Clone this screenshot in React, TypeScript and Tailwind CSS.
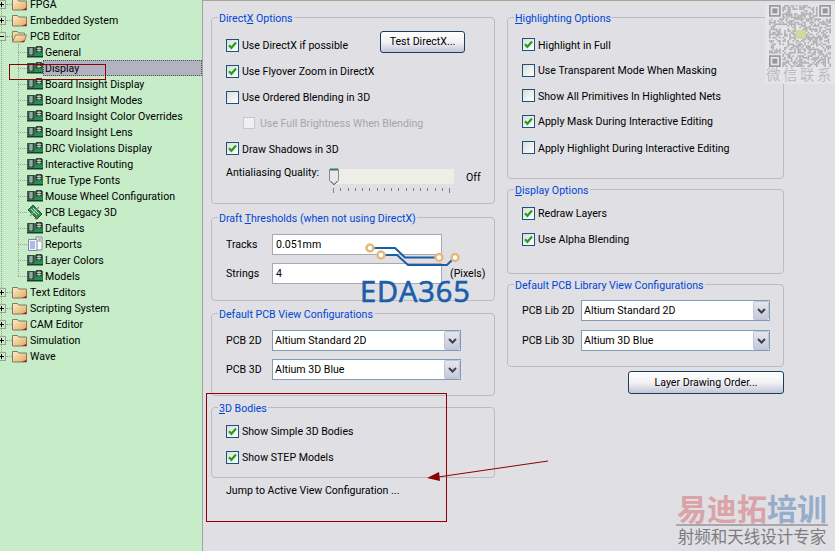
import React from "react";

const Check = () => (
  <svg width="9" height="9" viewBox="0 0 9 9" className="block">
    <path d="M1 4.2 L3.4 6.8 L8 1.5" fill="none" stroke="#21a121" strokeWidth="2.2" />
  </svg>
);

function CheckBox({ on }: { on: boolean }) {
  return (
    <span className="flex h-[13px] w-[13px] shrink-0 items-center justify-center border border-[#1c5180] bg-linear-to-br from-[#dcdcd7] to-white">
      {on ? <Check /> : null}
    </span>
  );
}

function CheckRow({ label, on, h }: { label: string; on: boolean; h: string }) {
  return (
    <div className={`flex items-center gap-[3px] ${h}`}>
      <CheckBox on={on} />
      <span className="whitespace-nowrap pt-[2px]">{label}</span>
    </div>
  );
}

function Group({ title, h, pad, children }: { title: React.ReactNode; h: string; pad: string; children?: React.ReactNode }) {
  return (
    <section className={`relative rounded-[4px] border border-[#bcbcc0] ${h} ${pad}`}>
      <h3 className="absolute left-[6px] top-[-6px] h-[14px] bg-[#dfdfe4] px-[1px] text-[10.6px] font-normal leading-[14px] text-[#0046d5] whitespace-nowrap">
        {title}
      </h3>
      {children}
    </section>
  );
}

function XpButton({ label, w, h }: { label: string; w: string; h: string }) {
  return (
    <button className={`flex items-center justify-center rounded-[3px] border border-[#15405f] bg-linear-to-b from-white via-[#f2f2f5] to-[#c5c5d6] text-black ${w} ${h}`}>
      {label}
    </button>
  );
}

function Select({ value, w }: { value: string; w: string }) {
  return (
    <div className={`flex h-[21px] items-center justify-between border border-[#7f9db9] bg-white pl-[2px] ${w}`}>
      <span className="whitespace-nowrap">{value}</span>
      <span className="flex h-[19px] w-[16px] items-center justify-center rounded-[2px] border border-[#c0c4d8] bg-linear-to-b from-[#e6e6ee] to-[#c4c8da]">
        <svg width="9" height="6" viewBox="0 0 9 6"><path d="M1 1 L4.5 4.5 L8 1" fill="none" stroke="#404048" strokeWidth="2" /></svg>
      </span>
    </div>
  );
}

function LabeledSelect({ label, value, labelW, w }: { label: string; value: string; labelW: string; w: string }) {
  return (
    <div className="flex h-[21px] items-center">
      <span className={`${labelW} whitespace-nowrap`}>{label}</span>
      <Select value={value} w={w} />
    </div>
  );
}

const PcbIcon = () => (
  <svg width="16" height="12" viewBox="0 0 16 12" className="block shrink-0">
    <rect x="0" y="1" width="16" height="10" fill="#3a6a50" />
    <rect x="1" y="1" width="6" height="8" fill="#3c4640" />
    <rect x="9" y="0" width="6" height="6" fill="#3c4640" />
    <path d="M2 3h4M2 5h4M2 7h4M4 2v7M10 2.500h4M10 4.500h4M12 1v5" stroke="#b4ccbc" strokeWidth="1" />
    <rect x="8" y="7" width="7" height="3" fill="#129a50" />
    <rect x="0" y="10" width="16" height="1.500" fill="#1c3c2c" />
  </svg>
);

const LegacyIcon = () => (
  <svg width="16" height="16" viewBox="0 0 16 16" className="block shrink-0">
    <path d="M1 6 L6 1 L15 10 L10 15 Z" fill="#2f8f52" stroke="#1e4f36" />
    <path d="M3 12 L12 3" stroke="#8a98a8" strokeWidth="1.500" />
    <path d="M4 5l6 6M6 4l6 6" stroke="#c6e8a8" strokeWidth="1" />
    <path d="M8 14l2 1" stroke="#d04020" strokeWidth="1.500" />
  </svg>
);

const ReportIcon = () => (
  <svg width="16" height="16" viewBox="0 0 16 16" className="block shrink-0">
    <path d="M9 1h6v13H9z" fill="#fff" stroke="#8088a0" />
    <path d="M1.500 3.500H10v11H1.500z" fill="#f4f6ff" stroke="#8088a0" />
    <path d="M3 6h5M3 8h5M3 10h5M3 12h5" stroke="#6a80c8" />
    <path d="M11 3h3M11 5h3" stroke="#808080" />
  </svg>
);

const Folder = ({ open }: { open?: boolean }) => (
  <svg width="15" height="14" viewBox="0 0 15 14" className="block shrink-0">
    <defs>
      <linearGradient id="fg" x1="0" y1="0" x2="1" y2="1">
        <stop offset="0" stopColor="#fdf0c8" />
        <stop offset="1" stopColor="#e0a860" />
      </linearGradient>
    </defs>
    {open ? (
      <>
        <path d="M0.500 13V2.500h5l1 1.500h6V6" fill="#f2dca8" stroke="#8a8060" />
        <path d="M0.500 13 L3.500 6H14.500L12 13Z" fill="url(#fg)" stroke="#8a8060" />
        <path d="M8 13h4l1-2z" fill="#c02020" />
      </>
    ) : (
      <>
        <path d="M0.500 13V2.500h5l1 1.500h8V13Z" fill="url(#fg)" stroke="#807a60" />
        <path d="M10 13h4.500v-2.500z" fill="#c02020" />
      </>
    )}
  </svg>
);

function Expander({ open }: { open?: boolean }) {
  return (
    <span className="absolute left-[-3px] top-[4px] flex h-[9px] w-[9px] items-center justify-center border border-[#a0a090] bg-[#c6ecc8]">
      <span className="relative block h-[5px] w-[5px]">
        <span className="absolute left-0 top-[2px] h-[1px] w-[5px] bg-black" />
        {open ? null : <span className="absolute left-[2px] top-0 h-[5px] w-[1px] bg-black" />}
      </span>
    </span>
  );
}

function TopRow({ label, open }: { label: string; open?: boolean }) {
  return (
    <div className="relative flex h-[16px] items-center pl-[12px]">
      <span className="absolute left-[6px] top-[8px] w-[6px] border-t border-dotted border-[#a0a090]" />
      <Expander open={open} />
      <Folder open={open} />
      <span className="ml-[3px] whitespace-nowrap pt-[2px]">{label}</span>
    </div>
  );
}

function ChildRow({ label, icon, selected }: { label: string; icon?: React.ReactNode; selected?: boolean }) {
  return (
    <div className="relative flex h-[16px] items-center pl-[27px]">
      <span className="absolute left-[18px] top-[8px] w-[9px] border-t border-dotted border-[#a0a090]" />
      {icon ?? <PcbIcon />}
      <span className={`flex h-[16px] flex-1 items-center whitespace-nowrap pt-[2px] ${selected ? "border border-dotted border-[#505060] bg-[#b1b3c1] pl-[1px]" : "pl-[2px]"}`}>
        {label}
      </span>
    </div>
  );
}

const children = ["Board Insight Display", "Board Insight Modes", "Board Insight Color Overrides", "Board Insight Lens", "DRC Violations Display", "Interactive Routing", "True Type Fonts", "Mouse Wheel Configuration"];

function Tree() {
  return (
    <aside className="relative h-[551px] w-[202px] shrink-0 overflow-hidden bg-[#c6ecc8] text-black">
      <span className="absolute left-[1px] top-0 h-[356px] border-l border-dotted border-[#a0a090]" />
      <span className="absolute left-[18px] top-[44px] h-[232px] border-l border-dotted border-[#a0a090]" />
      <div className="mt-[-4px] flex flex-col">
        <TopRow label="FPGA" />
        <TopRow label="Embedded System" />
        <TopRow label="PCB Editor" open />
        <ChildRow label="General" />
        <ChildRow label="Display" selected />
        {children.map((c) => <ChildRow key={c} label={c} />)}
        <ChildRow label="PCB Legacy 3D" icon={<LegacyIcon />} />
        <ChildRow label="Defaults" />
        <ChildRow label="Reports" icon={<ReportIcon />} />
        <ChildRow label="Layer Colors" />
        <ChildRow label="Models" />
        <TopRow label="Text Editors" />
        <TopRow label="Scripting System" />
        <TopRow label="CAM Editor" />
        <TopRow label="Simulation" />
        <TopRow label="Wave" />
      </div>
    </aside>
  );
}

function Slider() {
  const ticks = Array.from({ length: 17 });
  return (
    <div className="mt-[8px] flex h-[30px] items-start">
      <span className="-mt-[3px] w-[105px] whitespace-nowrap">Antialiasing Quality:</span>
      <div className="w-[123px]">
        <div className="relative h-[15px] rounded-[1px] bg-[#eeeee6]">
          <span className="absolute left-[-2px] top-[-1px] block">
            <svg width="10" height="18" viewBox="0 0 10 18">
              <path d="M0.500 1.500h9v11l-4.500 4.500-4.500-4.500z" fill="#e8e8ec" stroke="#8088a0" />
              <path d="M1 1.500h8" stroke="#3c7a4c" strokeWidth="2" />
              <path d="M1.500 13l3.500 3.500 3.500-3.500" fill="none" stroke="#3c7a4c" />
            </svg>
          </span>
        </div>
        <div className="mt-[4px] flex justify-between pl-[2px] pr-[4px]">
          {ticks.map((_, i) => (
            <span key={i} className={`w-[1px] bg-[#808080] ${i === 0 || i === 16 ? "h-[5px]" : "h-[3px]"}`} />
          ))}
        </div>
      </div>
      <span className="ml-[12px] pt-[2px]">Off</span>
    </div>
  );
}

function QrCode() {
  const n = 37;
  const cells: React.ReactNode[] = [];
  const inFinder = (x: number, y: number) => (x < 8 && y < 8) || (x >= n - 8 && y < 8) || (x < 8 && y >= n - 8);
  for (let y = 0; y < n; y++) {
    for (let x = 0; x < n; x++) {
      if (inFinder(x, y)) continue;
      const v = Math.sin(x * 12.9898 + y * 78.233) * 43758.5453;
      if (v - Math.floor(v) > 0.5) cells.push(<rect key={`${x}-${y}`} x={x} y={y} width="1" height="1" />);
    }
  }
  const finder = (x: number, y: number) => (
    <g key={`f${x}${y}`}>
      <rect x={x + 0.5} y={y + 0.5} width="6" height="6" fill="none" stroke="#98989c" strokeWidth="1" />
      <rect x={x + 2} y={y + 2} width="3" height="3" />
    </g>
  );
  return (
    <div className="absolute left-[765px] top-[4px] flex h-[80px] w-[70px] flex-col items-center bg-[#e6e6e9]">
      <svg width="64" height="62" viewBox="0 0 37 37" fill="#adadb1" className="mt-[1px]">
        {cells}
        <g fill="#98989c">{finder(0, 0)}{finder(30, 0)}{finder(0, 30)}</g>
        <rect x="16" y="15" width="6" height="5" fill="#d4d8a0" />
      </svg>
      <span className="-mt-[1px] text-[14.500px] leading-[16px] tracking-[2.500px] text-[#bcbcc0] whitespace-nowrap [font-family:'Noto_Sans_CJK_SC',sans-serif]">微信联系</span>
    </div>
  );
}

function Eda365() {
  return (
    <div className="absolute left-[360px] top-[243px] h-[62px] w-[130px]">
      <svg width="130" height="38" viewBox="0 0 130 38" className="absolute left-0 top-0">
        <path d="M10 5 H35 L45 14.500 H80" fill="none" stroke="#1a5ea8" strokeWidth="2" />
        <path d="M21 12 H37 L48 22 H87 L95 14" fill="none" stroke="#1a5ea8" strokeWidth="2" />
        <circle cx="10" cy="5" r="3.500" fill="#fff" stroke="#e6b87c" strokeWidth="2.500" />
        <circle cx="21" cy="12" r="3.500" fill="#fff" stroke="#e6b87c" strokeWidth="2.500" />
        <circle cx="79" cy="14.500" r="3.500" fill="#fff" stroke="#e6b87c" strokeWidth="2.500" />
        <circle cx="95" cy="14.500" r="3.500" fill="#fff" stroke="#e6b87c" strokeWidth="2.500" />
      </svg>
      <span className="absolute left-0 top-[32px] text-[29px] font-normal leading-[32px] tracking-[0.9px] text-[#1a5ea8] whitespace-nowrap [font-family:'Open_Sans',sans-serif] [-webkit-text-stroke:0.7px_#1a5ea8]">EDA365</span>
    </div>
  );
}

function Watermark() {
  return (
    <div className="absolute left-[676px] top-[492px] flex w-[152px] flex-col items-center [font-family:'Noto_Sans_CJK_SC',sans-serif]">
      <div className="flex h-[31px] items-center text-[30px] font-bold leading-[31px] whitespace-nowrap">
        <span className="text-[#d9a3a8]">易迪拓</span>
        <span className="text-[#95adc9]">培训</span>
      </div>
      <div className="mt-[1px] h-[2px] w-full bg-[#a8a8ac]" />
      <div className="text-[16.500px] leading-[20px] text-[#7c7c80] whitespace-nowrap">射频和天线设计专家</div>
    </div>
  );
}

function Annotations() {
  return (
    <>
      <div className="absolute left-[9px] top-[64px] h-[16px] w-[97px] border border-[#8b0000]" />
      <div className="absolute left-[206px] top-[393px] h-[129px] w-[241px] border border-[#8b0000]" />
      <svg width="130" height="30" viewBox="0 0 130 30" className="absolute left-[424px] top-[457px]">
        <path d="M124 4 L14 20" stroke="#8b0000" strokeWidth="1" />
        <path d="M3 21 L15 15 L16 24 Z" fill="#8b0000" />
      </svg>
    </>
  );
}

export default function App() {
  return (
    <div className="relative flex h-[551px] w-[835px] overflow-hidden bg-[#dfdfe4] text-[10.6px] leading-[14px] text-black [font-family:Roboto,'Liberation_Sans',Arial,sans-serif]">
      <Tree />
      <div className="h-full w-[1px] bg-[#a0a4a0]" />
      <main className="flex h-full flex-1 gap-[12px] border-t border-t-[#a8a898] pl-[8px] pt-[16px]">
        <div className="flex w-[284px] flex-col">
          <Group title={<>Direct<u>X</u> Options</>} h="h-[187px]" pad="pl-[14px] pt-[14px]">
            <div className="flex h-[26px] items-center justify-between pr-[29px]">
              <CheckRow label="Use DirectX if possible" on h="h-[26px]" />
              <div className="-mt-[6px]"><XpButton label="Test DirectX..." w="w-[85px]" h="h-[22px]" /></div>
            </div>
            <CheckRow label="Use Flyover Zoom in DirectX" on h="h-[26px]" />
            <CheckRow label="Use Ordered Blending in 3D" on={false} h="h-[26px]" />
            <div className="flex h-[26px] items-center gap-[5px] pl-[17px] text-[#a6a6aa]">
              <span className="h-[12px] w-[12px] border border-[#c8c8c8] bg-[#f0f0f0]" />
              <span className="whitespace-nowrap pt-[2px]">Use Full Brightness When Blending</span>
            </div>
            <CheckRow label="Draw Shadows in 3D" on h="h-[25px]" />
            <Slider />
          </Group>
          <div className="h-[13px]" />
          <Group title={<>Draft <u>T</u>hresholds (when not using DirectX)</>} h="h-[84px]" pad="pl-[14px] pt-[16px]">
            <div className="flex h-[21px] items-center">
              <span className="w-[46px]">Tracks</span>
              <div className="flex h-[21px] w-[170px] items-center border border-[#a8a8b0] bg-white pl-[3px]">0.051mm</div>
            </div>
            <div className="mt-[8px] flex h-[21px] items-center">
              <span className="w-[46px]">Strings</span>
              <div className="flex h-[21px] w-[170px] items-center border border-[#a8a8b0] bg-white pl-[3px]">4</div>
              <span className="ml-[8px] mt-[1px]">(Pixels)</span>
            </div>
          </Group>
          <div className="h-[12px]" />
          <Group title="Default PCB View Configurations" h="h-[83px]" pad="pl-[14px] pt-[16px]">
            <LabeledSelect label="PCB 2D" value="Altium Standard 2D" labelW="w-[46px]" w="w-[189px]" />
            <div className="h-[8px]" />
            <LabeledSelect label="PCB 3D" value="Altium 3D Blue" labelW="w-[46px]" w="w-[189px]" />
          </Group>
          <div className="h-[11px]" />
          <Group title={<><u>3</u>D Bodies</>} h="h-[71px]" pad="pl-[14px] pt-[10px]">
            <CheckRow label="Show Simple 3D Bodies" on h="h-[26px]" />
            <CheckRow label="Show STEP Models" on h="h-[26px]" />
          </Group>
          <div className="mt-[6px] pl-[15px]">Jump to Active View Configuration ...</div>
        </div>
        <div className="flex w-[277px] flex-col">
          <Group title={<><u>H</u>ighlighting Options</>} h="h-[162px]" pad="pl-[14px] pt-[14px]">
            <CheckRow label="Highlight in Full" on h="h-[25px]" />
            <CheckRow label="Use Transparent Mode When Masking" on={false} h="h-[26px]" />
            <CheckRow label="Show All Primitives In Highlighted Nets" on={false} h="h-[25px]" />
            <CheckRow label="Apply Mask During Interactive Editing" on h="h-[26px]" />
            <CheckRow label="Apply Highlight During Interactive Editing" on={false} h="h-[27px]" />
          </Group>
          <div className="h-[10px]" />
          <Group title={<><u>D</u>isplay Options</>} h="h-[85px]" pad="pl-[14px] pt-[10px]">
            <CheckRow label="Redraw Layers" on h="h-[26px]" />
            <CheckRow label="Use Alpha Blending" on h="h-[26px]" />
          </Group>
          <div className="h-[10px]" />
          <Group title="Default PCB Library View Configurations" h="h-[83px]" pad="pl-[14px] pt-[15px]">
            <LabeledSelect label="PCB Lib 2D" value="Altium Standard 2D" labelW="w-[59px]" w="w-[189px]" />
            <div className="h-[9px]" />
            <LabeledSelect label="PCB Lib 3D" value="Altium 3D Blue" labelW="w-[59px]" w="w-[189px]" />
          </Group>
          <div className="mt-[4px] flex justify-end">
            <XpButton label="Layer Drawing Order..." w="w-[156px]" h="h-[23px]" />
          </div>
        </div>
      </main>
      <QrCode />
      <Eda365 />
      <Watermark />
      <Annotations />
    </div>
  );
}
